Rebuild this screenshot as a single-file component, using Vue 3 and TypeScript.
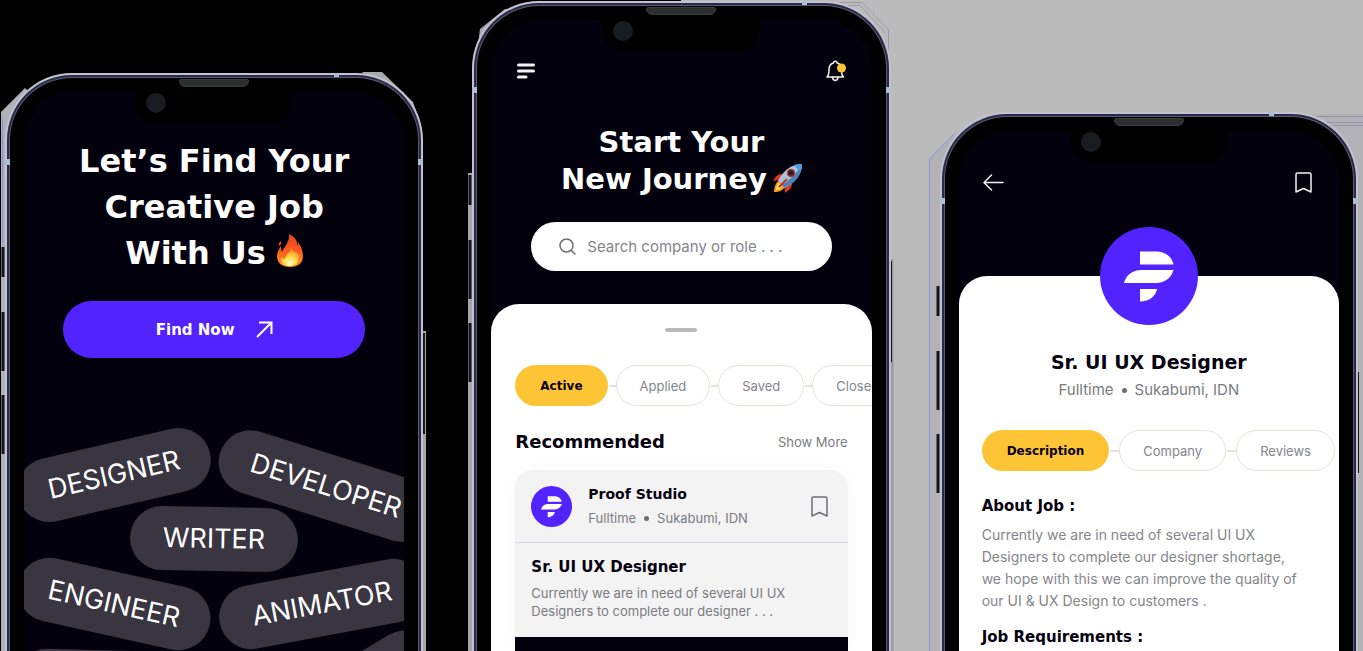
<script setup lang="ts">
interface Tag {
  label: string
  x: number
  y: number
  width: number
  angle: number
}

const tags: Tag[] = [
  { label: 'DESIGNER', x: 90, y: 117, width: 197, angle: -13 },
  { label: 'DEVELOPER', x: 302, y: 128, width: 222, angle: 17.5 },
  { label: 'WRITER', x: 190, y: 181, width: 168, angle: 1 },
  { label: 'ENGINEER', x: 90, y: 246, width: 196, angle: 12.5 },
  { label: 'ANIMATOR', x: 298, y: 246, width: 208, angle: -10.5 },
  { label: '', x: 106, y: 325, width: 230, angle: 1.5 },
  { label: '', x: 327, y: 337, width: 190, angle: -31 },
]

const filters: string[] = ['Active', 'Applied', 'Saved', 'Closed']
const sections: string[] = ['Description', 'Company', 'Reviews']

function tagStyle(tag: Tag) {
  return {
    left: `${tag.x}px`,
    top: `${tag.y}px`,
    width: `${tag.width}px`,
    transform: `translate(-50%, -50%) rotate(${tag.angle}deg)`,
  }
}
</script>

<template>
  <main class="stage">
    <!-- Welcome -->
    <section class="phone phone-welcome">
      <svg class="rim rim-left" width="14" height="700" viewBox="0 0 14 700" aria-hidden="true">
        <path d="M9 39 33 15 60 40 14 90V700H9z" fill="#b0b0b8" />
        <path d="M10.500 46V170" stroke="#8f8be0" />
        <path d="M11 174v30M11 239v59M11 322v59" stroke="#15151f" stroke-width="3" />
      </svg>
      <svg class="rim rim-right" width="14" height="700" viewBox="0 0 14 700" aria-hidden="true">
        <path d="M-60 -1H-40L-9 29-3 46-30 30z" fill="#aaaaae" />
        <path d="M2 258V700" stroke="#a5a5ac" stroke-width="4" />
        <path d="M2 260V361" stroke="#15151f" stroke-width="2" />
      </svg>
      <div class="shell">
        <span class="speaker"></span>
        <span class="antenna antenna-left"></span>
        <span class="antenna antenna-right"></span>
        <span class="antenna antenna-top"></span>
        <div class="screen">
          <span class="notch"><i class="camera"></i></span>
          <h1 class="hero">
            Let’s Find Your<br />Creative Job<br />With Us
            <svg class="fire" width="26" height="34" viewBox="0 0 26 34" role="img" aria-label="fire">
              <defs>
                <linearGradient id="flame" x1="0" y1="0" x2="0" y2="1">
                  <stop offset="0" stop-color="#e8401f" />
                  <stop offset="0.5" stop-color="#fb5a20" />
                  <stop offset="1" stop-color="#ff9a1c" />
                </linearGradient>
                <radialGradient id="glow" cx="0.5" cy="0.85" r="0.7">
                  <stop offset="0" stop-color="#fffbd0" />
                  <stop offset="0.45" stop-color="#ffe04a" />
                  <stop offset="1" stop-color="#ff8a2a" />
                </radialGradient>
              </defs>
              <path d="M12 0c6 3 9 7 8 12 1-1 1-3 1-4 3 4 5 9 5 14 0 7-5 11-13 11S0 29 0 22c0-4 2-7 4-10 0 2 0 4 1 6C7 13 13 8 12 0z" fill="url(#flame)" />
              <path d="M4 7c-2 1-3 3-2 5 2-1 3-3 2-5z" fill="#e8401f" />
              <path d="M14 13c1 4 4 6 6 5 0 3 1 3 2 2 1 8-3 12-9 12S3 29 4 23c1 1 2 2 4 2 0-5 6-6 6-12z" fill="url(#glow)" />
            </svg>
          </h1>
          <button class="cta" type="button">
            Find Now
            <svg width="17" height="17" viewBox="0 0 17 17" fill="none" stroke="#fff" stroke-width="2" aria-hidden="true">
              <path d="M1 16 15.500 1.500M3 1.500H15.500V13" />
            </svg>
          </button>
          <div class="cloud">
            <span v-for="(tag, i) in tags" :key="i" class="tag" :style="tagStyle(tag)">{{ tag.label }}</span>
          </div>
        </div>
      </div>
    </section>

    <!-- Job feed -->
    <section class="phone phone-feed">
      <svg class="rim rim-left" width="14" height="700" viewBox="0 0 14 700" aria-hidden="true">
        <path d="M18 52 21 28 46 8 60 10 20 60z" fill="#a9a9ae" />
        <path d="M11 172V700" stroke="#a5a5ac" stroke-width="4" />
        <path d="M11 174v30M11 239v59M11 322v59" stroke="#15151f" stroke-width="3" />
      </svg>
      <svg class="rim rim-right" width="14" height="700" viewBox="0 0 14 700" aria-hidden="true">
        <path d="M-50 1.500H-28L-1.500 29V70M-45 4.500H-30L-4.500 32" stroke="#9c9ca8" fill="none" />
        <path d="M2 258V700" stroke="#9a9aa8" stroke-width="3" />
        <path d="M1 260V361" stroke="#15151f" stroke-width="2" />
      </svg>
      <div class="shell">
        <span class="speaker"></span>
        <span class="antenna antenna-left"></span>
        <span class="antenna antenna-right"></span>
        <span class="antenna antenna-top"></span>
        <div class="screen">
          <span class="notch"><i class="camera"></i></span>
          <header class="bar">
            <button class="icon" type="button" aria-label="Menu">
              <svg width="18" height="16" viewBox="0 0 18 16" stroke="#f2f2f2" stroke-width="3" stroke-linecap="round">
                <path d="M1.500 2H16.500M1.500 8H16.500M1.500 14H9" />
              </svg>
            </button>
            <button class="icon" type="button" aria-label="Notifications">
              <svg width="20" height="22" viewBox="0 0 20 22" fill="none" stroke="#f2f2f2" stroke-width="1.500" stroke-linejoin="round" stroke-linecap="round">
                <path d="M1 17H17.500C16 15.500 15.500 13 15.500 10 15.500 6 13.500 3.500 11 3 11 .5 7.500.5 7.500 3 5 3.500 3 6 3 10 3 13 2.500 15.500 1 17z" />
                <path d="M6.500 17C6.500 21.500 12 21.500 12 17" />
                <circle cx="15.500" cy="8" r="4.500" fill="#fdc536" stroke="none" />
              </svg>
            </button>
          </header>
          <h2 class="title">
            Start Your<br />New Journey
            <svg class="rocket" width="29" height="29" viewBox="0 0 29 29" role="img" aria-label="rocket">
              <path d="M9 10C5 10 3 12 0 17c3-1 5-1 7 0zM19 19c0 4-2 7-7 10 0-3 0-5-2-7z" fill="#e5331c" />
              <path d="M5 17C2 20 1 24 1 28c5 0 8-1 11-5z" fill="#ff9a1f" />
              <path d="M6 19c-2 2-3 5-3 7 3 0 5-1 6-4z" fill="#ffe65a" />
              <path d="M29 0C20 0 11 5 5 17l7 7C23 18 29 10 29 0z" fill="#a9c4d8" />
              <path d="M29 0c0 10-6 18-17 24l-3-3C18 15 24 9 29 0z" fill="#4a83b5" />
              <path d="M29 0c-3 0-5 0-8 1l6 7c1-3 2-5 2-8z" fill="#4d9ee0" />
              <circle cx="18" cy="9" r="4" fill="#b52323" />
              <circle cx="18" cy="9" r="2.500" fill="#182330" />
              <path d="M14 15 6 23" stroke="#c9281c" stroke-width="2" />
            </svg>
          </h2>
          <label class="search">
            <svg width="17" height="17" viewBox="0 0 17 17" fill="none" stroke="#6e6e75" stroke-width="1.500" stroke-linecap="round" aria-hidden="true">
              <circle cx="7.500" cy="7.500" r="6.500" />
              <path d="M12.500 12.500 16 16" />
            </svg>
            <input type="text" placeholder="Search company or role . . ." aria-label="Search company or role" />
          </label>
          <div class="sheet feed">
            <span class="handle"></span>
            <nav class="tabs">
              <button v-for="(name, i) in filters" :key="name" class="tab" :class="{ on: i === 0 }" type="button">{{ name }}</button>
            </nav>
            <div class="row">
              <h3>Recommended</h3>
              <a class="more" href="#">Show More</a>
            </div>
            <article class="card">
              <div class="company">
                <svg width="41" height="41" viewBox="0 0 98 98" aria-hidden="true">
                  <circle cx="49" cy="49" r="49" fill="#5223ff" />
                  <path d="M40 24.500H56c9 0 16 5 17.500 13H40zM24 56c2-8 9-13 17-13H73.500C72 50 65 56 56 56zM40 62H57C56 69 49 74.500 40 74.500z" fill="#fff" />
                </svg>
                <div class="who">
                  <strong>Proof Studio</strong>
                  <span class="meta">Fulltime<i class="dot"></i>Sukabumi, IDN</span>
                </div>
                <button class="icon" type="button" aria-label="Save job">
                  <svg width="17" height="21" viewBox="0 0 17 21" fill="none" stroke="#6e6e75" stroke-width="1.500" stroke-linejoin="round">
                    <path d="M1 20V2.500Q1 1 2.500 1H14.500Q16 1 16 2.500V20L8.500 16.500z" />
                  </svg>
                </button>
              </div>
              <div class="offer">
                <h4>Sr. UI UX Designer</h4>
                <p>Currently we are in need of several UI UX<br />Designers to complete our designer . . .</p>
              </div>
              <div class="foot"></div>
            </article>
          </div>
        </div>
      </div>
    </section>

    <!-- Job details -->
    <section class="phone phone-detail">
      <svg class="rim rim-left" width="14" height="700" viewBox="0 0 14 700" aria-hidden="true">
        <path d="M2.500 700V47L30 20 60 8 14 90V700z" fill="#b2b2b7" />
        <path d="M2.500 700V47L28 21" stroke="#8f8be0" fill="none" />
        <path d="M11 174v30M11 239v59M11 322v59" stroke="#15151f" stroke-width="3" />
      </svg>
      <svg class="rim rim-right" width="14" height="700" viewBox="0 0 14 700" aria-hidden="true">
        <path d="M-60 2H14V700H-2V60z" fill="#b2b2b7" />
        <path d="M-40 4.500H14M-34 10.500H14M-32 13.500H14" stroke="#9696a8" />
        <path d="M1 260V361" stroke="#15151f" stroke-width="2" />
      </svg>
      <div class="shell">
        <span class="speaker"></span>
        <span class="antenna antenna-left"></span>
        <span class="antenna antenna-right"></span>
        <span class="antenna antenna-top"></span>
        <div class="screen">
          <span class="notch"><i class="camera"></i></span>
          <header class="bar">
            <button class="icon" type="button" aria-label="Back">
              <svg width="21" height="17" viewBox="0 0 21 17" fill="none" stroke="#f2f2f2" stroke-width="1.500" stroke-linecap="round" stroke-linejoin="round">
                <path d="M20 8.500H1M8.500 1 1 8.500 8.500 16" />
              </svg>
            </button>
            <button class="icon" type="button" aria-label="Save job">
              <svg width="17" height="21" viewBox="0 0 17 21" fill="none" stroke="#f2f2f2" stroke-width="1.500" stroke-linejoin="round">
                <path d="M1 20V2.500Q1 1 2.500 1H14.500Q16 1 16 2.500V20L8.500 16.500z" />
              </svg>
            </button>
          </header>
          <div class="sheet detail">
            <svg class="logo" width="98" height="98" viewBox="0 0 98 98" aria-hidden="true">
              <circle cx="49" cy="49" r="49" fill="#5223ff" />
              <path d="M40 24.500H56c9 0 16 5 17.500 13H40zM24 56c2-8 9-13 17-13H73.500C72 50 65 56 56 56zM40 62H57C56 69 49 74.500 40 74.500z" fill="#fff" />
            </svg>
            <h2 class="job">Sr. UI UX Designer</h2>
            <span class="meta">Fulltime<i class="dot"></i>Sukabumi, IDN</span>
            <nav class="tabs">
              <button v-for="(name, i) in sections" :key="name" class="tab" :class="{ on: i === 0 }" type="button">{{ name }}</button>
              <i class="tail"></i>
            </nav>
            <h3>About Job :</h3>
            <p>
              Currently we are in need of several UI UX<br />Designers to complete our designer shortage,<br />we hope with this we can improve the quality of<br />our UI &amp; UX Design to customers .
            </p>
            <h3>Job Requirements :</h3>
          </div>
        </div>
      </div>
    </section>
  </main>
</template>

<style>
html,
body,
#app {
  height: 100%;
  overflow: hidden;
}
</style>

<style scoped>
.stage {
  display: grid;
  grid-template-columns: repeat(3, minmax(0, 1fr));
  column-gap: 49px;
  box-sizing: border-box;
  height: 100vh;
  padding: 0 5px;
  overflow: hidden;
  background: linear-gradient(90deg, #000 50%, #bbb 50%);
  color: #05010f;
  font-family: Inter, "Liberation Sans", sans-serif;
}

h1, h2, h3, h4, p {
  margin: 0;
}

h1, h2, h3, h4, strong, .cta, .tab.on {
  font-family: "DejaVu Sans", Inter, sans-serif;
  font-weight: 700;
}

button {
  border: 0;
  padding: 0;
  background: none;
  font-family: inherit;
  cursor: pointer;
}

svg {
  flex: none;
}

.phone {
  position: relative;
  display: flex;
  min-width: 0;
}

.phone-welcome { padding-top: 73px; }
.phone-feed { padding-top: 1px; }
.phone-detail { padding-top: 112px; }

.rim {
  position: absolute;
  overflow: visible;
}

.rim-left { right: 100%; margin-right: -1px; }
.rim-right { left: 100%; margin-left: -1px; }

.shell {
  position: relative;
  display: flex;
  flex: 1;
  min-width: 0;
  padding: 17px 17px 0;
  border: 2px solid #c3c3cd;
  border-bottom: 0;
  border-radius: 67px 67px 0 0;
  background: #000;
  box-shadow: inset 0 0 0 2px #2a294d, inset 0 0 0 3px #565d6c;
}

.speaker {
  position: absolute;
  top: 4px;
  left: 50%;
  width: 70px;
  height: 8px;
  margin-left: -35px;
  box-sizing: border-box;
  border: 1px solid #3a3c3c;
  border-radius: 2px 2px 6px 6px;
  background: #2d2f2f;
}

.antenna {
  position: absolute;
  width: 5px;
  height: 6px;
  background: #a9c0d4;
}

.antenna-left { left: -2px; top: 84px; }
.antenna-right { right: -2px; top: 84px; }
.antenna-top { right: 82px; top: -2px; height: 4px; }

.screen {
  position: relative;
  display: flex;
  flex: 1;
  flex-direction: column;
  min-width: 0;
  overflow: hidden;
  border-radius: 50px 50px 0 0;
  background: #04010f;
}

.notch {
  position: absolute;
  top: 0;
  left: 50%;
  width: 157px;
  height: 32px;
  margin-left: -79px;
  border-radius: 0 0 22px 22px;
  background: #000;
}

.camera {
  position: absolute;
  top: 1px;
  left: 11px;
  width: 20px;
  height: 20px;
  border-radius: 50%;
  background: #181b1f;
}

/* Welcome */
.hero {
  padding-top: 46px;
  color: #fff;
  font-size: 32px;
  line-height: 46px;
  text-align: center;
}

.fire {
  vertical-align: -4px;
}

.cta {
  display: flex;
  align-items: center;
  justify-content: center;
  gap: 21px;
  height: 57px;
  margin: 25px 39px 0;
  border-radius: 29px;
  background: #5223ff;
  color: #fff;
  font-size: 15px;
}

.cloud {
  position: relative;
  flex: 1;
}

.tag {
  position: absolute;
  height: 64px;
  border-radius: 32px;
  background: #393541;
  color: #fff;
  font-size: 27px;
  line-height: 64px;
  text-align: center;
}

/* Shared screen parts */
.bar {
  display: flex;
  align-items: center;
  justify-content: space-between;
  height: 30px;
  padding: 36px 26px 0;
}

.icon,
.icon svg {
  display: block;
}

.sheet {
  flex: 1;
  display: flex;
  flex-direction: column;
  border-radius: 28px 28px 0 0;
  background: #fff;
}

.tabs {
  display: flex;
  flex: none;
}

.tab {
  position: relative;
  flex: none;
  box-sizing: border-box;
  height: 41px;
  padding: 0 23px;
  border: 1px solid #e3e3da;
  border-radius: 21px;
  color: #85858a;
  font-size: 13px;
}

.tab.on {
  padding: 0 24px;
  border-color: #fdc536;
  background: #fdc536;
  color: #05010f;
  font-size: 12px;
}

.tab + .tab::before {
  content: "";
  position: absolute;
  right: 100%;
  top: 19px;
  width: 8px;
  height: 2px;
  background: #e3e3da;
}

.meta {
  display: flex;
  align-items: center;
  color: #7b7b81;
}

.dot {
  width: 5px;
  height: 5px;
  margin: 0 8px;
  border-radius: 50%;
  background: #6e6e75;
}

/* Job feed */
.title {
  padding-top: 38px;
  color: #fff;
  font-size: 29px;
  line-height: 37px;
  text-align: center;
}

.rocket {
  margin-left: -4px;
  vertical-align: -4px;
}

.search {
  display: flex;
  align-items: center;
  gap: 11px;
  height: 49px;
  margin: 24px 40px 33px;
  padding: 0 28px;
  border-radius: 25px;
  background: #fff;
}

.search input {
  flex: 1;
  min-width: 0;
  padding: 0;
  border: 0;
  outline: 0;
  background: none;
  font: 15px Inter, "Liberation Sans", sans-serif;
}

.search input::placeholder {
  color: #85858a;
  opacity: 1;
}

.feed {
  padding: 0 24px;
}

.handle {
  align-self: center;
  flex: none;
  width: 32px;
  height: 4px;
  margin: 24px 0 33px;
  border-radius: 2px;
  background: #b9b9b9;
}

.feed .tabs {
  gap: 8px;
}

.row {
  display: flex;
  align-items: center;
  justify-content: space-between;
  margin: 24px 0 16px;
}

.row h3 {
  font-size: 18px;
  line-height: 24px;
}

.more {
  color: #7b7b81;
  font-size: 13px;
  text-decoration: none;
}

.card {
  display: flex;
  flex: 1;
  flex-direction: column;
  overflow: hidden;
  border-radius: 18px 18px 0 0;
  background: #f3f3f3;
  box-shadow: 0 0 24px rgba(0, 0, 0, 0.03);
}

.company {
  display: flex;
  align-items: center;
  height: 72px;
  padding: 0 20px 0 16px;
  border-bottom: 1px solid #dadae6;
}

.who {
  flex: 1;
  padding-left: 16px;
}

.who strong {
  display: block;
  font-size: 14px;
  line-height: 24px;
}

.who .meta {
  font-size: 13px;
  line-height: 24px;
}

.offer {
  padding: 12px 16px 17px;
}

.offer h4 {
  font-size: 15px;
  line-height: 24px;
}

.offer p {
  padding-top: 5px;
  color: #7b7b81;
  font-size: 13px;
  line-height: 18px;
}

.foot {
  flex: 1;
  background: #04010f;
}

/* Job details */
.phone-detail .bar {
  padding: 36px 27px 0 24px;
}

.detail {
  margin-top: 79px;
  padding: 0 23px;
}

.logo {
  align-self: center;
  margin-top: -49px;
}

.job {
  margin-top: 25px;
  font-size: 19px;
  line-height: 24px;
  text-align: center;
}

.detail .meta {
  justify-content: center;
  margin: 4px 0 28px;
  font-size: 15px;
  line-height: 24px;
}

.detail .tabs {
  gap: 10px;
}

.detail .tab + .tab::before {
  width: 10px;
}

.tail {
  align-self: center;
  width: 24px;
  height: 2px;
}

.detail .tail {
  margin-left: -10px;
  background: #e3e3da;
}

.detail h3 {
  margin: 23px 0 6px;
  font-size: 15px;
  line-height: 24px;
}

.detail p {
  color: #85858a;
  font-size: 14px;
  line-height: 22px;
}

.detail p + h3 {
  margin-top: 13px;
}
</style>
